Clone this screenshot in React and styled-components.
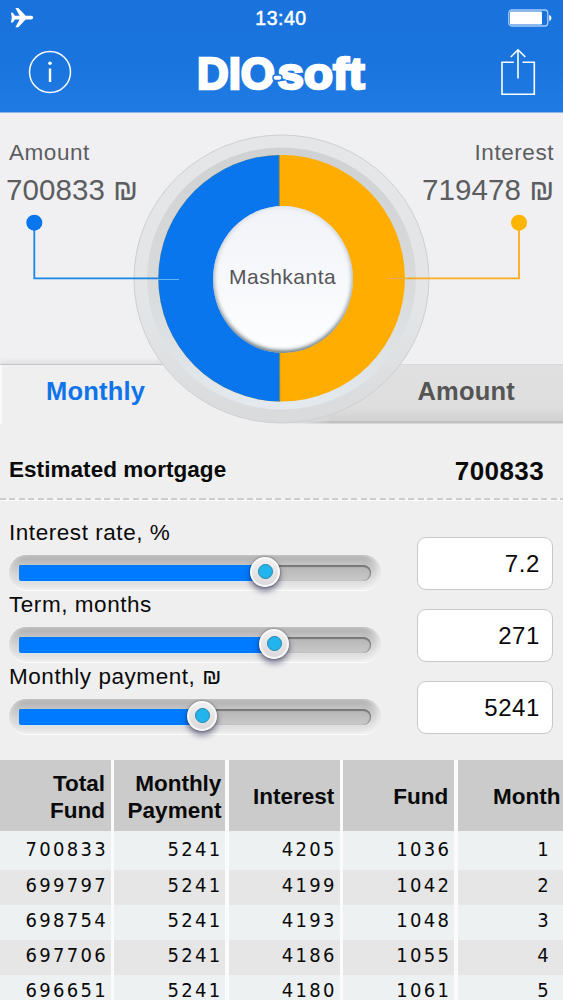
import React from 'react'
import styled, { createGlobalStyle } from 'styled-components'

const GlobalStyle = createGlobalStyle`
  *{
    box-sizing:border-box;
  }
  body{
    margin:0;
    background:#efefef;
    font-family:"Liberation Sans", Arial, sans-serif;
  }
`;

const Screen = styled.div`
  width:563px;
  height:1000px;
  overflow:hidden;
  display:flex;
  flex-direction:column;
  background:#efefef;
  color:#0a0a0a;
`;

const Header = styled.header`
  flex:none;
  height:113px;
  color:#fff;
  background:linear-gradient(#1a73dc 0%, #1a74dd 55%, #217be4 100%);
  border-bottom:1px solid #8fb6e6;
`;

const StatusBar = styled.div`
  height:36px;
  display:grid;
  grid-template-columns:1fr auto 1fr;
  align-items:center;
  padding:0 11px 0 10px;
  svg{
    display:block;
  }
  svg:last-child{
    justify-self:end;
  }
`;

const Clock = styled.span`
  font-size:19.5px;
  line-height:36px;
  letter-spacing:0.5px;
  -webkit-text-stroke:0.5px #fff;
`;

const NavBar = styled.div`
  height:76px;
  display:flex;
  padding:0 27px 0 28px;
  svg{
    display:block;
  }
  svg:nth-child(2){
    margin:0 auto 0 118px;
  }
`;

const Chart = styled.section`
  flex:none;
  position:relative;
  height:311px;
  display:flex;
  flex-direction:column;
  justify-content:space-between;
  background:#f0f0f2;
`;

const Readouts = styled.div`
  display:flex;
  justify-content:space-between;
  padding:27px 9px 0 6px;
`;

const Readout = styled.div`
  color:#5c5d60;
  text-align:${(p) => (p.$right ? 'right' : 'left')};
`;

const ReadoutLabel = styled.div`
  font-size:22.5px;
  line-height:26px;
  letter-spacing:0.55px;
  padding-left:3px;
`;

const ReadoutValue = styled.div`
  font-size:29.5px;
  line-height:34px;
  margin-top:7px;
  white-space:pre;
  letter-spacing:0.1px;
`;

const Sheqel = styled.span`
  font-size:${(p) => p.$size}px;
  letter-spacing:0;
`;

const Tabs = styled.div`
  display:grid;
  grid-template-columns:1fr 1fr;
  height:60px;
`;

const Tab = styled.button`
  border:none;
  font:bold 25.5px/52px "Liberation Sans", Arial, sans-serif;
  letter-spacing:0.2px;
  display:flex;
  padding:0 0 0 ${(p) => p.$indent}px;
  color:${(p) => (p.$active ? '#0f74ea' : '#555')};
  background:${(p) => (p.$active ? '#efefef' : 'linear-gradient(90deg, #efefef 0, rgba(239,239,239,0) 50px), linear-gradient(#e0e0e0 0%, #dedede 70%, #d2d2d2 94%, #b9b9b9 97%, #e4e4e4 100%)')};
  border-top:1px solid ${(p) => (p.$active ? '#c6c6c6' : '#dadada')};
  box-shadow:${(p) => (p.$active ? '0 -3px 5px rgba(0,0,0,0.07), inset 2px 0 #fafafa' : 'none')};
`;

const Donut = styled.svg`
  position:absolute;
  left:0;
  top:0;
`;

const Summary = styled.div`
  flex:none;
  height:75px;
  display:flex;
  justify-content:space-between;
  padding:30px 19px 0 9px;
  font-weight:bold;
`;

const SummaryLabel = styled.span`
  font-size:22.5px;
  line-height:31px;
  letter-spacing:0.05px;
`;

const SummaryValue = styled.span`
  font-size:26px;
  line-height:35px;
  letter-spacing:0.4px;
`;

const Perforation = styled.div`
  flex:none;
  height:3px;
  border-bottom:1px solid #fafafa;
  margin-top:-1px;
  background:repeating-linear-gradient(90deg, #cdcdcd 0, #cdcdcd 6px, #f5f5f5 6px, #f5f5f5 9.5px);
`;

const Inputs = styled.section`
  flex:none;
  height:259px;
  padding:19px 10px 0 9px;
`;

const InputRow = styled.div`
  height:72.2px;
  display:flex;
  justify-content:space-between;
`;

const InputLabel = styled.div`
  font-size:22.5px;
  line-height:26px;
  letter-spacing:0.55px;
  white-space:pre;
`;

const Track = styled.div`
  width:372px;
  height:35px;
  margin-top:8.5px;
  padding:10px;
  border-radius:18px;
  background:linear-gradient(#adadad 0%, #c2c2c2 25%, #d8d8d8 60%, #e9e9e9 100%);
  box-shadow:inset 2px 0 4px rgba(255,255,255,0.3), inset -4px -1px 5px rgba(255,255,255,0.5), 0 1px 0 #fbfbfb;
`;

const Groove = styled.div`
  position:relative;
  height:16px;
  border-radius:2px 8px 8px 2px;
  background:linear-gradient(#b4b4b4, #c9c9c9);
  box-shadow:inset 0 2px 1px #777, inset -1px 0 1px #888;
`;

const Fill = styled.div`
  height:16px;
  border-radius:2px 0 0 2px;
  background:#007aff;
  box-shadow:0 1px 0 #cfe6fb;
`;

const Knob = styled.div`
  position:absolute;
  top:-8px;
  width:30px;
  height:30px;
  margin-left:-15px;
  border-radius:50%;
  display:flex;
  align-items:center;
  justify-content:center;
  background:linear-gradient(#f0f0f0, #dadadc);
  border:2px solid #f8f8f8;
  box-shadow:0 4px 6px rgba(30,30,70,0.6), 0 0 2px rgba(0,0,0,0.5);
  &::after{
    content:"";
    width:13px;
    height:13px;
    border-radius:50%;
    background:#22b4ec;
    border:1.5px solid #2a83ab;
  }
`;

const ValueBox = styled.div`
  width:136px;
  height:53px;
  margin-top:17px;
  padding-right:12px;
  text-align:right;
  font-size:24px;
  line-height:51px;
  letter-spacing:0.6px;
  background:#fff;
  border:1px solid #c8c8c8;
  border-radius:9px;
`;

const Table = styled.section`
  flex:1;
  background:#fbfbfb;
`;

const TableRow = styled.div`
  display:grid;
  grid-template-columns:repeat(4, 111px) 1fr;
  column-gap:3.4px;
`;

const HeadCell = styled.div`
  height:71px;
  display:flex;
  align-items:center;
  justify-content:flex-end;
  text-align:right;
  white-space:pre-line;
  font-size:22.5px;
  line-height:27px;
  font-weight:bold;
  padding:2px ${(p) => p.$end}px 0 0;
  background:#cbcbcb;
`;

const Cell = styled.div`
  height:${(p) => (p.$first ? 39 : 35)}px;
  padding:${(p) => (p.$first ? 3 : 0)}px ${(p) => p.$end}px 0 0;
  text-align:right;
  font-family:"DejaVu Sans Condensed", "DejaVu Sans", sans-serif;
  font-stretch:condensed;
  font-size:20px;
  line-height:31px;
  letter-spacing:2.3px;
  background:${(p) => (p.$even ? '#e6e6e6' : '#edf1f2')};
`;

const sliders = [
  { label: 'Interest rate, %', value: '7.2', pos: 246 },
  { label: 'Term, months', value: '271', pos: 255 },
  { label: 'Monthly payment, ', sheqel: true, value: '5241', pos: 183 },
];

const columns = [
  { title: 'Total\nFund', head: 6, body: 3 },
  { title: 'Monthly\nPayment', head: 4, body: 3 },
  { title: 'Interest', head: 5.5, body: 3 },
  { title: 'Fund', head: 6, body: 3 },
  { title: 'Month', head: 2.5, body: 12 },
];

const rows = [
  [700833, 5241, 4205, 1036, 1],
  [699797, 5241, 4199, 1042, 2],
  [698754, 5241, 4193, 1048, 3],
  [697706, 5241, 4186, 1055, 4],
  [696651, 5241, 4180, 1061, 5],
];

const Plane = () => (
  <svg width="24" height="22" viewBox="0 0 24 22" fill="#fff">
    <path d="M1 5.800h1.800l2.200 3h4.600L5.400 1h2.900l7.400 7.800h5.300c1.400 0 2.200.9 2.200 1.800s-.8 1.800-2.200 1.800h-5.300l-7.400 7.800H5.400l4.200-7.800H5l-2.200 3H1l.8-4.800z" />
  </svg>
);

const Battery = () => (
  <svg width="44" height="18" viewBox="0 0 44 18" fill="none">
    <rect x="0.8" y="1" width="39" height="16" rx="3" stroke="#a9cdf5" strokeWidth="1.3" />
    <rect x="2" y="2.5" width="32" height="13" rx="1" fill="#fff" />
    <path d="M41.2 6c3 .8 3 5.200 0 6z" fill="#fff" />
  </svg>
);

const InfoIcon = () => (
  <svg width="44" height="76" viewBox="0 0 44 76">
    <circle cx="22" cy="36" r="20.500" fill="none" stroke="#fff" strokeWidth="1.500" />
    <circle cx="22" cy="27.300" r="1.800" fill="#fff" />
    <path d="M22 32.500v13.500" stroke="#fff" strokeWidth="2.400" />
  </svg>
);

const ShareIcon = () => (
  <svg width="36" height="76" viewBox="0 0 36 76" fill="none" stroke="#fff" strokeWidth="1.600">
    <path d="M13.800 26.300H2v32h32.300v-32H22.500" />
    <path d="M18 42.500V14M10.800 21L18 13.800l7.300 7.200" />
  </svg>
);

const Logo = () => (
  <svg width="180" height="76" viewBox="190 36 180 76">
    <g fill="#fff" stroke="#fff" fontFamily="Liberation Sans" fontWeight="bold">
      <text x="197" y="89" fontSize="45" strokeWidth="2.600" textLength="78" lengthAdjust="spacingAndGlyphs">DIO</text>
      <text x="277.500" y="89" fontSize="44" strokeWidth="2.600" textLength="87" lengthAdjust="spacingAndGlyphs">soft</text>
    </g>
    <rect x="273" y="75" width="9" height="5.500" rx="2.500" fill="#fff" stroke="#1c76df" strokeWidth="1.400" />
  </svg>
);

const MortgageDonut = () => (
  <Donut width="563" height="311" viewBox="0 113 563 311">
    <defs>
      <linearGradient id="rim" x1="0" y1="0" x2="0" y2="1">
        <stop offset="0" stopColor="#e4e6e8" />
        <stop offset="0.6" stopColor="#e3e5e6" />
        <stop offset="1" stopColor="#d9dadb" />
      </linearGradient>
      <linearGradient id="well" x1="0" y1="0" x2="0" y2="1">
        <stop offset="0" stopColor="#cfd1d3" />
        <stop offset="0.5" stopColor="#d8dadb" />
        <stop offset="1" stopColor="#e3e9ee" />
      </linearGradient>
      <linearGradient id="hub" x1="0" y1="0" x2="0" y2="1">
        <stop offset="0" stopColor="#f1f3f8" />
        <stop offset="1" stopColor="#fdfeff" />
      </linearGradient>
      <linearGradient id="hubEdge" x1="0" y1="0" x2="0" y2="1">
        <stop offset="0" stopColor="#d5dce6" />
        <stop offset="0.5" stopColor="#98a3ad" />
        <stop offset="1" stopColor="#33474d" />
      </linearGradient>
      <filter id="soft">
        <feGaussianBlur stdDeviation="2" />
      </filter>
      <clipPath id="hubClip">
        <ellipse cx="283" cy="279.500" rx="70" ry="73.500" />
      </clipPath>
      <clipPath id="leftHalf">
        <path d="M150 150h129.200l.6 256H150z" />
      </clipPath>
    </defs>
    <ellipse cx="281.500" cy="279" rx="147.500" ry="144" fill="url(#rim)" stroke="#cfcfd1" strokeWidth="1" />
    <ellipse cx="281.500" cy="278.500" rx="134.500" ry="131" fill="url(#well)" />
    <circle cx="281.600" cy="278.200" r="123.300" fill="#ffad00" />
    <circle cx="281.600" cy="278.200" r="123.300" fill="#0a76ee" clipPath="url(#leftHalf)" />
    <path d="M279.200 155l.6 246.400" stroke="#8b8a4a" strokeWidth="0.800" />
    <ellipse cx="283" cy="279.500" rx="70" ry="73.500" fill="url(#hub)" />
    <g clipPath="url(#hubClip)">
      <ellipse cx="283" cy="279" rx="71" ry="74" fill="none" stroke="url(#hubEdge)" strokeWidth="4" filter="url(#soft)" />
    </g>
    <path d="M34.300 223v55.300H158" fill="none" stroke="#1a86e8" strokeWidth="1.800" />
    <path d="M158 279.500h21" stroke="#62b6f2" strokeWidth="1" />
    <circle cx="34.300" cy="222.700" r="8" fill="#0a76ee" />
    <path d="M519 223v55.300H405" fill="none" stroke="#fbab1c" strokeWidth="1.800" />
    <path d="M405 278.500h-17" stroke="#e2a860" strokeWidth="1" />
    <circle cx="519" cy="222.700" r="8" fill="#ffb400" />
    <text x="229" y="283.500" fontSize="21" letterSpacing="0.500" fill="#555659">Mashkanta</text>
  </Donut>
);

const App = () => {
  return (
    <Screen>
      <GlobalStyle />
      <Header>
        <StatusBar>
          <Plane />
          <Clock>13:40</Clock>
          <Battery />
        </StatusBar>
        <NavBar>
          <InfoIcon />
          <Logo />
          <ShareIcon />
        </NavBar>
      </Header>
      <Chart>
        <Readouts>
          <Readout>
            <ReadoutLabel>Amount</ReadoutLabel>
            <ReadoutValue>700833 <Sheqel $size={29}>₪</Sheqel></ReadoutValue>
          </Readout>
          <Readout $right>
            <ReadoutLabel>Interest</ReadoutLabel>
            <ReadoutValue>719478 <Sheqel $size={29}>₪</Sheqel></ReadoutValue>
          </Readout>
        </Readouts>
        <Tabs>
          <Tab $active $indent={46}>Monthly</Tab>
          <Tab $indent={136}>Amount</Tab>
        </Tabs>
        <MortgageDonut />
      </Chart>
      <Summary>
        <SummaryLabel>Estimated mortgage</SummaryLabel>
        <SummaryValue>700833</SummaryValue>
      </Summary>
      <Perforation />
      <Inputs>
        {sliders.map((s) => (
          <InputRow key={s.label}>
            <div>
              <InputLabel>{s.label}{s.sheqel && <Sheqel $size={22.5}>₪</Sheqel>}</InputLabel>
              <Track>
                <Groove>
                  <Fill style={{ width: s.pos }} />
                  <Knob style={{ left: s.pos }} />
                </Groove>
              </Track>
            </div>
            <ValueBox>{s.value}</ValueBox>
          </InputRow>
        ))}
      </Inputs>
      <Table>
        <TableRow>
          {columns.map((c) => (
            <HeadCell key={c.title} $end={c.head}>{c.title}</HeadCell>
          ))}
        </TableRow>
        {rows.map((row, i) => (
          <TableRow key={row[4]}>
            {row.map((n, j) => (
              <Cell key={j} $first={i === 0} $even={i % 2 === 1} $end={columns[j].body}>{n}</Cell>
            ))}
          </TableRow>
        ))}
      </Table>
    </Screen>
  )
}

export default App
